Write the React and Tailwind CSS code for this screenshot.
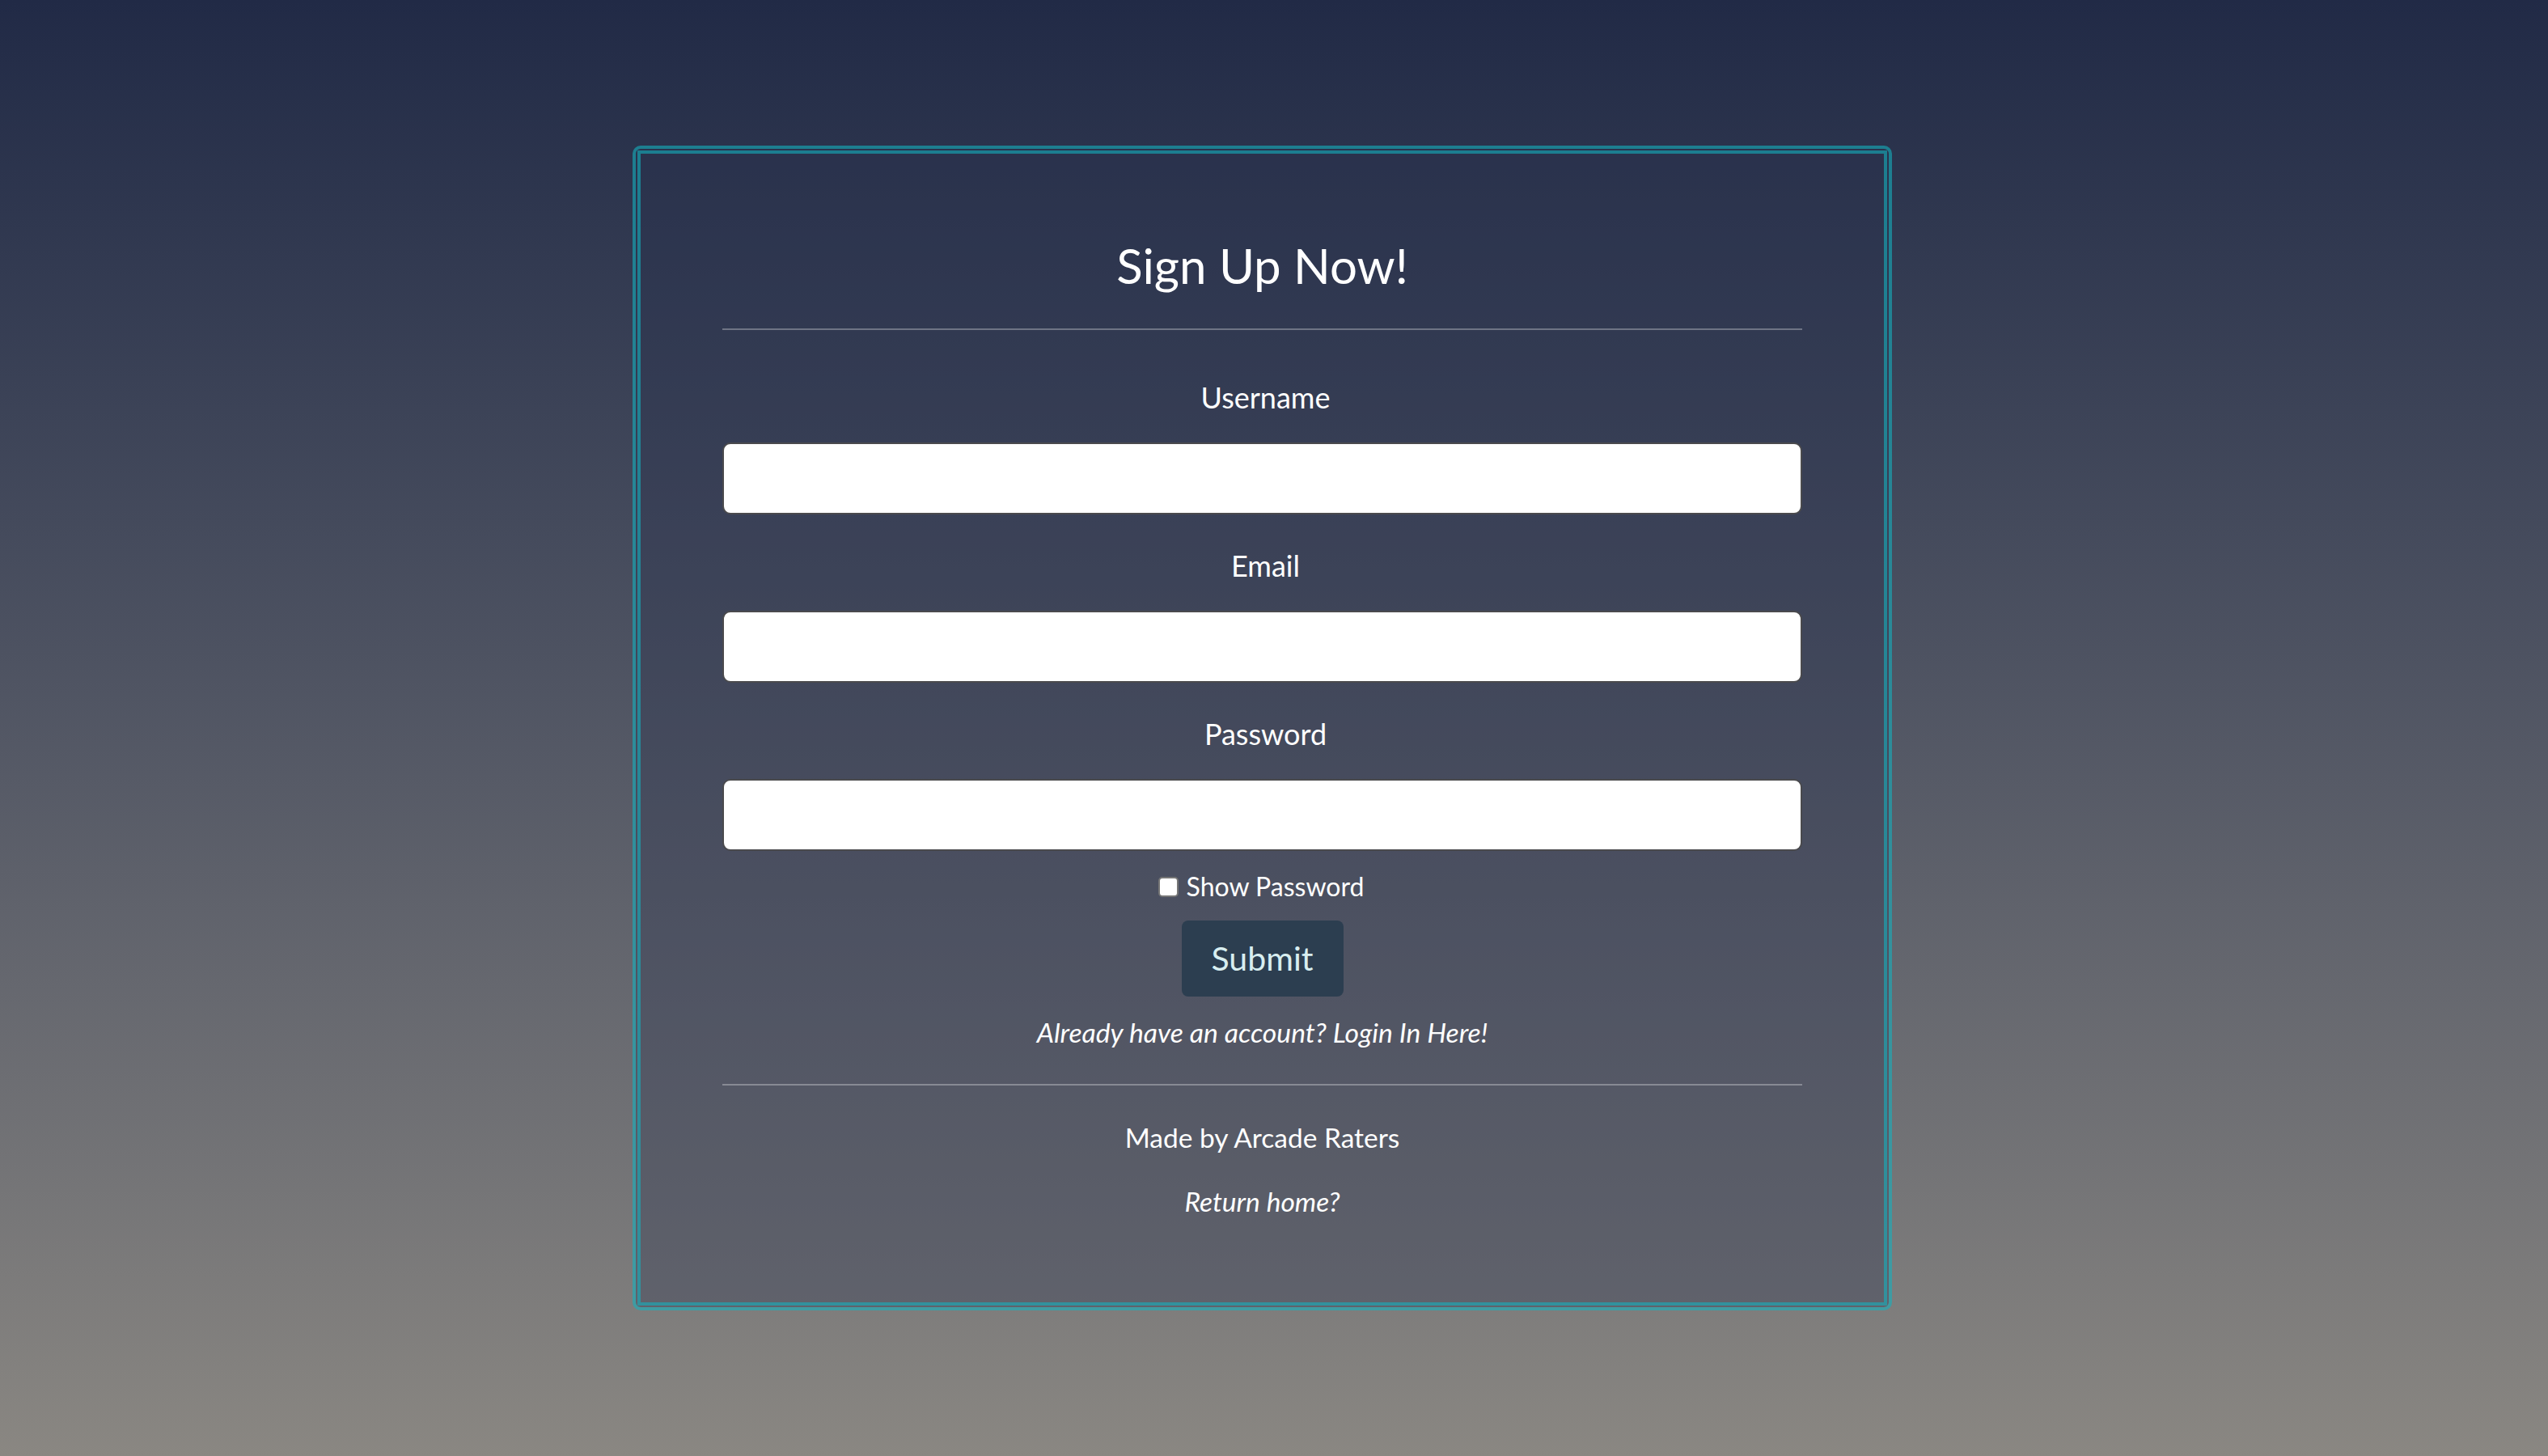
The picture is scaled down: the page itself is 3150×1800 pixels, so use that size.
import { useState } from "react";

function Field({ label, type, first }) {
  return (
    <>
      <label className={`block pl-[8px] text-center text-[36px] leading-[44px] text-white ${first ? "mt-[61px]" : "mt-[41px]"}`}>
        {label}
      </label>
      <input
        type={type}
        className="mt-[34px] block w-full h-[89px] bg-white border-2 border-[#4a4a4d] rounded-[10px] px-6 text-[32px] text-[#212529] outline-none"
      />
    </>
  );
}

export default function App() {
  const [showPassword, setShowPassword] = useState(false);

  return (
    <div className="min-h-screen bg-gradient-to-b from-[#212a46] to-[#8a8782] pt-[180px] pb-[180px] font-['Lato',sans-serif]">
      {/* Card with double teal border */}
      <div className="ml-[782px] w-[1557px] border-4 border-[rgba(20,176,190,0.6)] rounded-[10px] p-[2px] bg-[rgba(40,48,78,0.35)] bg-clip-padding">
        <div className="border-4 border-[rgba(20,176,190,0.6)] px-[101px] pt-[102px] pb-[105px]">
          <h2 className="text-center text-[60px] leading-[72px] text-white">Sign Up Now!</h2>
          <div className="mt-[42px] h-[2px] bg-white/30" />

          <Field label="Username" type="text" first />
          <Field label="Email" type="email" />
          <Field label="Password" type={showPassword ? "text" : "password"} />

          <div className="mt-[24px] flex items-center justify-center gap-[10px] h-[40px]">
            <input
              type="checkbox"
              checked={showPassword}
              onChange={(e) => setShowPassword(e.target.checked)}
              className="appearance-none w-[25px] h-[25px] bg-white border-2 border-[#767676] rounded-[5px] -ml-[3px]"
            />
            <span className="text-[32px] leading-[40px] text-white">Show Password</span>
          </div>

          <div className="mt-[22px] flex justify-center">
            <button className="w-[200px] h-[94px] bg-[#2c3e50] rounded-[8px] text-[41px] text-[#d8eef0]">
              Submit
            </button>
          </div>

          <p className="mt-[24px] text-center italic text-[33.7px] leading-[40px] text-white">
            Already have an account? Login In Here!
          </p>

          <div className="mt-[44px] h-[2px] bg-white/30" />

          <p className="mt-[42px] text-center text-[33.5px] leading-[44px] text-white">Made by Arcade Raters</p>
          <p className="mt-[37px] text-center italic text-[33.5px] leading-[40px] text-white">Return home?</p>
        </div>
      </div>
    </div>
  );
}
